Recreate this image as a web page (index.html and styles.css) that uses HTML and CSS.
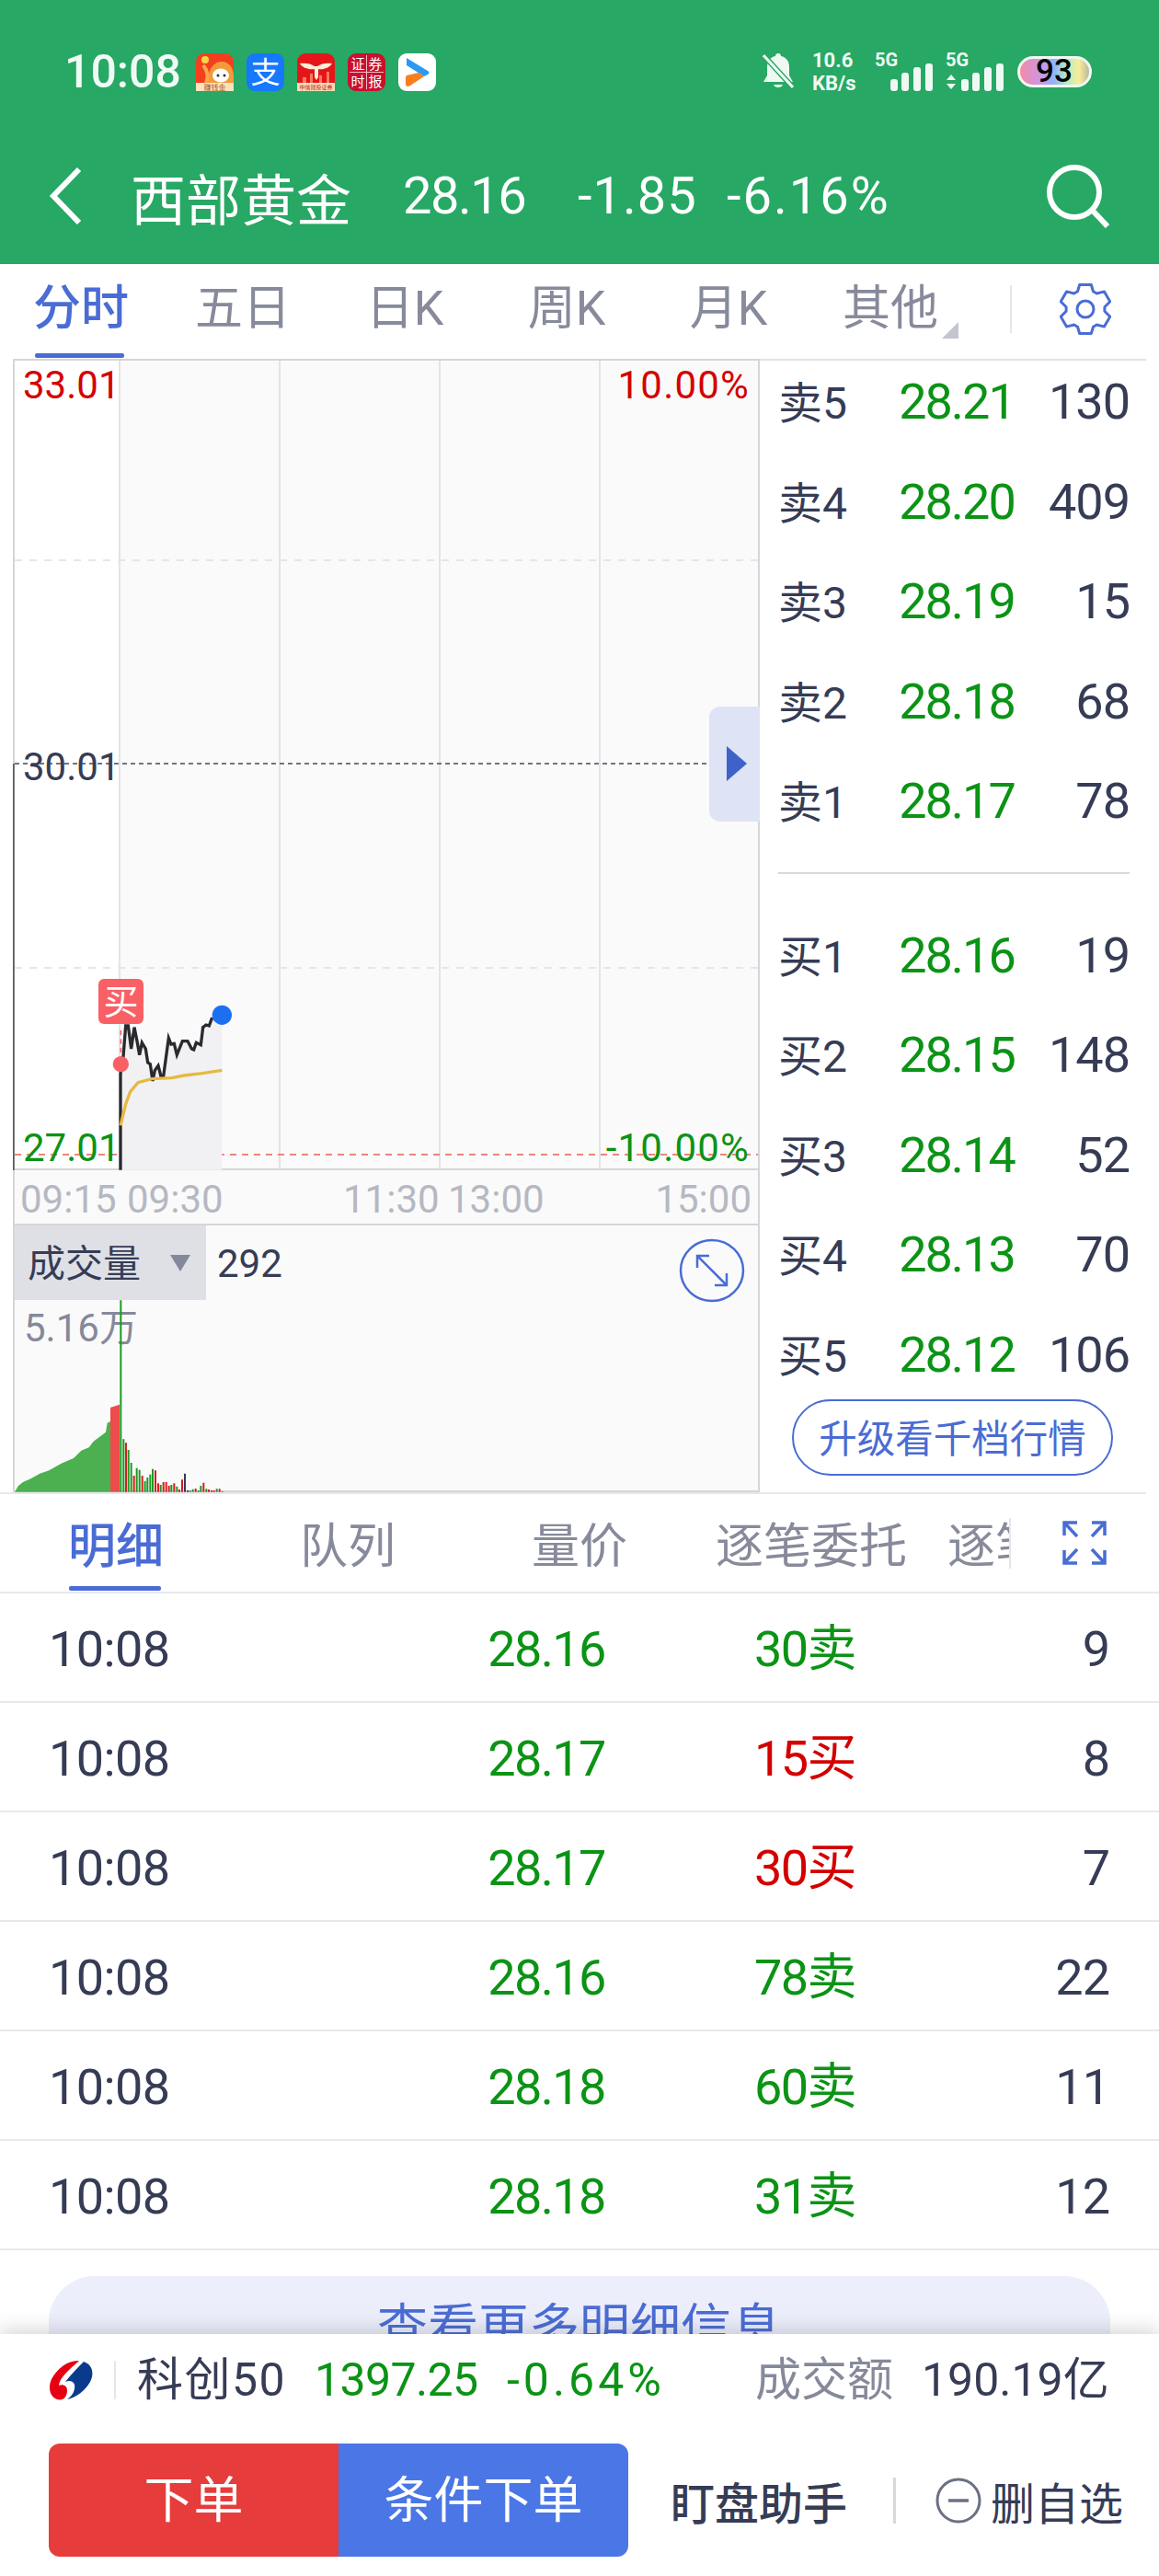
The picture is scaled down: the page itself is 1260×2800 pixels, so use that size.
FILE: index.html
```html
<!DOCTYPE html>
<html lang="zh-CN">
<head>
  <meta charset="UTF-8" />
  <meta name="viewport" content="width=device-width, initial-scale=1.0" />
  <title>西部黄金</title>
  <link rel="stylesheet" href="styles.css">
</head>
<body>
<div class="phone">
  <header class="header">
    <div class="status">
      <span class="clock">10:08</span>
      <div class="app-icons">
        <svg class="app" viewBox="0 0 41 41"><rect width="41" height="41" rx="9" fill="#f2401f"/><path d="M13 34c-1-14 5-25 15-25 9 0 13 8 13 16v9z" fill="#f59a3a"/><ellipse cx="27" cy="24" rx="9" ry="7.500" fill="#fff"/><circle cx="24" cy="24" r="1.500" fill="#333"/><circle cx="31" cy="24" r="1.500" fill="#333"/><circle cx="10" cy="7" r="4" fill="#f7d24a"/><path d="M8 13c5 6 6 12 3 20" stroke="#f9a64a" stroke-width="4" fill="none"/><rect y="32" width="41" height="9" fill="#fbe3bd"/><text class="app-small" x="20.500" y="40" text-anchor="middle">赚钱金</text></svg>
        <svg class="app" viewBox="0 0 41 41"><rect width="41" height="41" rx="9" fill="#1677ff"/><text class="app-char" x="20.500" y="32" text-anchor="middle">支</text></svg>
        <svg class="app" viewBox="0 0 41 41"><rect width="41" height="41" rx="9" fill="#e5161a"/><path d="M3 11c6-1 12 0 16 3h3c4-3 10-4 16-3-3 5-10 7-15 6v9l-2 3-2-3v-9c-6 1-13-1-16-6z" fill="#fdeed8"/><path d="M6 32v-6h4v6zm8 0v-10h3v10zm10 0v-8h3v8zm8 0v-12h3v12z" fill="#f77b5c"/><rect y="32" width="41" height="9" fill="#fbdcb4"/><text class="app-tiny" x="20.500" y="39" text-anchor="middle">中信建投证券</text></svg>
        <svg class="app" viewBox="0 0 41 41"><rect width="41" height="41" rx="9" fill="#c9102f"/><path d="M20.500 2v37M2 20.500h37" stroke="#f4b9c0" stroke-width="1"/><text class="app-cell" x="11" y="17" text-anchor="middle">证</text><text class="app-cell" x="30" y="17" text-anchor="middle">券</text><text class="app-cell" x="11" y="36" text-anchor="middle">时</text><text class="app-cell" x="30" y="36" text-anchor="middle">报</text></svg>
        <svg class="app" viewBox="0 0 41 41"><rect width="41" height="41" rx="9" fill="#fff"/><path d="M9 5l23 14c2 1 2 3 0 4l-4 2L9 13z" fill="#2b9af3"/><path d="M9 24l13-3 6 4-15 10c-3 2-5 1-5-2v-7z" fill="#f97e1c"/></svg>
      </div>
      <div class="status-right">
        <svg class="bell" viewBox="0 0 34 42"><path d="M17 1c2 0 3 1 3 3 6 1 9 6 9 12v9l4 7H1l4-7v-9c0-6 3-11 9-12 0-2 1-3 3-3zM12 35h10c-1 4-9 4-10 0z" fill="#eef9f3"/><path d="M1 3l32 35" stroke="#27a864" stroke-width="6"/><path d="M1 3l32 35" stroke="#eef9f3" stroke-width="3"/></svg>
        <div class="speed"><span>10.6</span><span>KB/s</span></div>
        <svg class="signal" viewBox="0 -4 64 46"><text class="net" x="0" y="15">5G</text><rect x="17" y="29" width="8" height="13" rx="3"/><rect x="29" y="22" width="8" height="20" rx="3"/><rect x="42" y="16" width="8" height="26" rx="3"/><rect x="55" y="12" width="8" height="30" rx="3"/></svg>
        <svg class="signal signal-b" viewBox="0 -4 64 46"><text class="net" x="0" y="15">5G</text><path d="M1 30l5-6 5 6zM1 34l5 6 5-6z"/><rect x="17" y="29" width="8" height="13" rx="3"/><rect x="29" y="22" width="8" height="20" rx="3"/><rect x="42" y="16" width="8" height="26" rx="3"/><rect x="55" y="12" width="8" height="30" rx="3"/></svg>
        <span class="battery">93</span>
      </div>
    </div>
    <div class="nav">
      <svg class="back" viewBox="0 0 36 64"><path d="M33 3L5 32l28 29" fill="none" stroke="#fff" stroke-width="6"/></svg>
      <span class="stock-name">西部黄金</span>
      <span class="stock-price">28.16</span>
      <span class="stock-diff">-1.85</span>
      <span class="stock-pct">-6.16%</span>
      <svg class="search" viewBox="0 0 70 70"><circle cx="31" cy="31" r="27" fill="none" stroke="#fff" stroke-width="6"/><path d="M50 50l17 18" stroke="#fff" stroke-width="6"/></svg>
    </div>
  </header>

  <nav class="period-tabs">
    <span class="period active">分时</span>
    <span class="period">五日</span>
    <span class="period">日K</span>
    <span class="period">周K</span>
    <span class="period">月K</span>
    <span class="period more">其他</span>
    <span class="tab-sep"></span>
    <svg class="gear" viewBox="0 0 56 56"><path d="M21.700 1.500H34.300L36.500 8.800L40.300 11L48.500 8.900L54.800 19.800L48.900 25.800V30.200L54.800 36.200L48.500 47.100L40.300 45L36.500 47.200L34.300 54.500H21.700L19.500 47.200L15.700 45L7.500 47.100L1.200 36.200L7.100 30.200V25.800L1.200 19.800L7.500 8.900L15.700 11L19.500 8.800Z" fill="none" stroke="#4a6cd4" stroke-width="3" stroke-linejoin="round"/><circle cx="28" cy="28" r="9" fill="none" stroke="#4a6cd4" stroke-width="3"/></svg>
  </nav>

  <section class="quote">
    <div class="charts">
      <svg class="price-chart" viewBox="14 390 812 882">
        <rect x="14" y="390" width="812" height="882" fill="#fafafa"/>
        <rect x="16" y="390" width="114" height="882" fill="#fff"/>
        <path class="grid" d="M130 390V1272M304 390V1272M478 390V1272M652 390V1272"/>
        <path class="grid-dash" d="M16 609H826M16 1052H826"/>
        <path class="mid-dash" d="M16 830H826"/>
        <path class="low-dash" d="M16 1255H826"/>
        <path class="frame" d="M15 390V1272M14 391H826M825 390V1272M14 1271H826"/>
        <g transform="translate(0 1000) scale(.33333)">
          <path class="area" d="M393 815V500L400 470L410 345L418 345L428 420L438 350L447 395L455 440L463 400L475 420L482 465L490 470L498 525L505 490L516 475L525 510L533 510L550 385L558 405L568 403L577 440L595 395L612 395L625 420L632 423L640 400L655 407L662 350L672 342L682 345L692 318L724 310V815Z"/>
          <path class="dash-up" d="M394 360V450"/>
          <path class="price-line" d="M393 815V500L400 470L410 345L418 345L428 420L438 350L447 395L455 440L463 400L475 420L482 465L490 470L498 525L505 490L516 475L525 510L533 510L550 385L558 405L568 403L577 440L595 395L612 395L625 420L632 423L640 400L655 407L662 350L672 342L682 345L692 318"/>
          <path class="avg-line" d="M393 670L410 600L425 560L450 530L495 518L560 515L600 507L660 500L724 490"/>
          <circle cx="724" cy="310" r="32" fill="#1d6ff2"/>
          <circle cx="394" cy="470" r="26" fill="#f96065"/>
          <path class="axis-dark" d="M44 -510V820H393"/>
        </g>
        <rect x="107" y="1064" width="49" height="49" rx="6" fill="#f96065"/>
        <text class="badge-text" x="131.500" y="1102" text-anchor="middle">买</text>
        <text class="lbl up" x="25" y="433">33.01</text>
        <text class="lbl pct up" x="815" y="433" text-anchor="end">10.00%</text>
        <text class="lbl dark" x="25" y="848">30.01</text>
        <text class="lbl down" x="25" y="1262">27.01</text>
        <text class="lbl pct down" x="815" y="1262" text-anchor="end">-10.00%</text>
        <path d="M826 768H783a12 12 0 0 0-12 12V881a12 12 0 0 0 12 12H826z" fill="#dfe3f6"/>
        <path d="M790 811l22 19-22 19z" fill="#3f62c9"/>
      </svg>
      <svg class="time-axis" viewBox="14 1272 812 58">
        <path class="frame" d="M15 1272V1330M825 1272V1330"/>
        <text class="tick" x="22" y="1318">09:15</text>
        <text class="tick" x="138" y="1318">09:30</text>
        <text class="tick" x="373" y="1318">11:30</text>
        <text class="tick" x="487" y="1318">13:00</text>
        <text class="tick" x="817" y="1318" text-anchor="end">15:00</text>
      </svg>
      <svg class="volume" viewBox="14 1330 812 292">
        <rect x="16" y="1330" width="208" height="83" fill="#dfe0e5"/>
        <path class="frame" d="M15 1330V1622M14 1331H826M825 1330V1622M14 1621H826"/>
        <text class="lbl vol-name" x="30" y="1388">成交量</text>
        <path d="M185 1364h22l-11 18z" fill="#85889a"/>
        <text class="lbl dark" x="236" y="1388">292</text>
        <text class="lbl grey" x="26" y="1458">5.16万</text>
        <g transform="translate(0 1300) scale(.33333)">
          <path d="M48 965L60 945L75 933L100 922L130 905L160 895L200 872L240 855L265 830L290 820L305 800L345 770L350 740L360 735V965Z" fill="#4cb050"/>
          <path d="M360 690L390 680V965H360Z" fill="#ee4b4b"/>
          <path class="bar-g" d="M394 340V965M403 793V965M419 828V965M428 870V965M446 887V965M455 893V965M473 930V965M481 918V965M490 908V965M498 890V965M524 942V965M559 942V965M577 947V965M620 960V965M629 956V965M647 960V965M655 945V965M673 955V965M707 955V965M725 962V965"/>
          <path class="bar-r" d="M411 805V965M437 912V965M464 912V965M507 895V965M516 937V965M533 933V965M542 933V965M551 945V965M568 937V965M585 957V965M594 925V965M638 954V965M664 935V965M681 957V965M690 960V965M698 960V965M716 955V965"/>
          <path class="bar-d" d="M603 905V965M612 960V965"/>
        </g>
        <g fill="none" stroke="#4a6cd4" stroke-width="2.500">
          <ellipse cx="774" cy="1381" rx="34" ry="33"/>
          <path d="M759 1366l30 30M758 1378v-13h13M790 1384v13h-13"/>
        </g>
      </svg>
    </div>
    <div class="book">
      <div class="book-row"><span class="b-label">卖5</span><span class="b-price">28.21</span><span class="b-count">130</span></div>
      <div class="book-row"><span class="b-label">卖4</span><span class="b-price">28.20</span><span class="b-count">409</span></div>
      <div class="book-row"><span class="b-label">卖3</span><span class="b-price">28.19</span><span class="b-count">15</span></div>
      <div class="book-row"><span class="b-label">卖2</span><span class="b-price">28.18</span><span class="b-count">68</span></div>
      <div class="book-row"><span class="b-label">卖1</span><span class="b-price">28.17</span><span class="b-count">78</span></div>
      <div class="book-sep"></div>
      <div class="book-row"><span class="b-label">买1</span><span class="b-price">28.16</span><span class="b-count">19</span></div>
      <div class="book-row"><span class="b-label">买2</span><span class="b-price">28.15</span><span class="b-count">148</span></div>
      <div class="book-row"><span class="b-label">买3</span><span class="b-price">28.14</span><span class="b-count">52</span></div>
      <div class="book-row"><span class="b-label">买4</span><span class="b-price">28.13</span><span class="b-count">70</span></div>
      <div class="book-row"><span class="b-label">买5</span><span class="b-price">28.12</span><span class="b-count">106</span></div>
      <div class="upgrade">升级看千档行情</div>
    </div>
  </section>

  <div class="detail-tabs">
    <div class="detail-scroll">
      <span class="detail-tab active">明细</span>
      <span class="detail-tab">队列</span>
      <span class="detail-tab">量价</span>
      <span class="detail-tab">逐笔委托</span>
      <span class="detail-tab">逐笔成交</span>
    </div>
    <svg class="fullscreen" viewBox="0 0 48 48"><path d="M2 16V2h14M2 2l14 15M32 2h14v14M46 2L32 17M2 32v14h14M2 46l14-15M46 32v14H32M46 46L32 31" fill="none" stroke="#4a6cd4" stroke-width="3.500"/></svg>
  </div>

  <div class="trades">
    <div class="trade"><span class="t-time">10:08</span><span class="t-price">28.16</span><span class="t-vol down">30卖</span><span class="t-num">9</span></div>
    <div class="trade"><span class="t-time">10:08</span><span class="t-price">28.17</span><span class="t-vol up">15买</span><span class="t-num">8</span></div>
    <div class="trade"><span class="t-time">10:08</span><span class="t-price">28.17</span><span class="t-vol up">30买</span><span class="t-num">7</span></div>
    <div class="trade"><span class="t-time">10:08</span><span class="t-price">28.16</span><span class="t-vol down">78卖</span><span class="t-num">22</span></div>
    <div class="trade"><span class="t-time">10:08</span><span class="t-price">28.18</span><span class="t-vol down">60卖</span><span class="t-num">11</span></div>
    <div class="trade"><span class="t-time">10:08</span><span class="t-price">28.18</span><span class="t-vol down">31卖</span><span class="t-num">12</span></div>
  </div>
  <div class="more-btn">查看更多明细信息</div>

  <footer class="footer">
    <div class="index-row">
      <svg class="logo" viewBox="0 0 48 44"><ellipse cx="24" cy="22" rx="24" ry="21" fill="#fff"/><path d="M33 1C22 0 9 9 3 21c-4 9-2 19 6 22 7 2 11-3 11-10 0-5-5-7-9-5 1-9 10-16 22-27z" fill="#e60012"/><path d="M38 2c9 3 12 12 7 22-5 9-15 17-25 19 6-4 9-10 8-16-1-4-6-5-10-3 6-8 13-15 20-22z" fill="#0a3a8c"/></svg>
      <span class="index-sep"></span>
      <span class="index-name">科创50</span>
      <span class="index-val">1397.25</span>
      <span class="index-pct">-0.64%</span>
      <span class="index-turn-label">成交额</span>
      <span class="index-turn">190.19亿</span>
    </div>
    <div class="action-row">
      <div class="order-btns">
        <span class="btn-order">下单</span>
        <span class="btn-cond">条件下单</span>
      </div>
      <span class="helper">盯盘助手</span>
      <span class="action-sep"></span>
      <svg class="minus" viewBox="0 0 50 50"><circle cx="25" cy="25" r="23" fill="none" stroke="#6b7084" stroke-width="3"/><path d="M14 25h22" stroke="#6b7084" stroke-width="3.500"/></svg>
      <span class="remove">删自选</span>
    </div>
  </footer>
</div>
</body>
</html>
```

FILE: styles.css
```css
* {
  box-sizing: border-box;
}
body {
  margin: 0;
  background: #fff;
  font-family: Roboto, "Noto Sans CJK SC", sans-serif;
  color: #363c55;
}
.phone {
  position: relative;
  width: 1260px;
  height: 2800px;
  overflow: hidden;
}

/* header */
.header {
  height: 287px;
  background: #27a864;
  color: #f0faf5;
}
.status {
  display: flex;
  align-items: center;
  height: 156px;
  padding-left: 70px;
}
.clock {
  width: 143px;
  font-size: 50px;
  font-weight: 500;
}
.app-icons {
  display: flex;
  gap: 14px;
}
.app {
  width: 41px;
  height: 41px;
}
.app-char {
  font-size: 32px;
  fill: #fff;
}
.app-small {
  font-size: 8px;
  fill: #a8561c;
}
.app-tiny {
  font-size: 6px;
  fill: #b8261c;
}
.app-cell {
  font-size: 15px;
  fill: #fff;
}
.status-right {
  display: flex;
  align-items: center;
  margin-left: 355px;
}
.bell {
  width: 34px;
  height: 42px;
}
.speed {
  display: flex;
  flex-direction: column;
  margin-left: 20px;
  font-size: 22px;
  font-weight: 700;
  line-height: 25px;
  color: #eef9f3;
}
.signal {
  width: 64px;
  height: 46px;
  margin-left: 20px;
  margin-bottom: 4px;
  fill: #eef9f3;
}
.signal-b {
  margin-left: 13px;
}
.net {
  font-size: 20px;
  font-weight: 700;
}
.battery {
  width: 81px;
  height: 34px;
  margin-left: 14px;
  border: 3px solid #eef9f3;
  border-radius: 17px;
  background: linear-gradient(90deg, #f58aa5, #c39af0 35%, #8fb6f5 50%, #b6ecc0 68%, #f9ee9a 85%, #b9b9a0);
  color: #000;
  font-size: 35px;
  font-weight: 500;
  line-height: 28px;
  text-align: center;
}
.nav {
  display: flex;
  align-items: center;
  height: 131px;
  padding: 0 53px 17px;
  color: #fff;
  white-space: nowrap;
}
.back {
  width: 36px;
  height: 64px;
  flex: none;
}
.stock-name {
  width: 296px;
  margin-left: 53px;
  font-size: 60px;
}
.stock-price,
.stock-diff,
.stock-pct {
  font-size: 56px;
}
.stock-price {
  width: 190px;
  letter-spacing: -1.500px;
}
.stock-diff {
  width: 162px;
  letter-spacing: 1px;
}
.stock-pct {
  letter-spacing: 2px;
}
.search {
  width: 70px;
  height: 70px;
  flex: none;
  margin-left: auto;
}

/* period tabs */
.period-tabs {
  display: flex;
  align-items: center;
  height: 103px;
  padding-bottom: 6px;
}
.period {
  position: relative;
  width: 176px;
  text-align: center;
  font-size: 52px;
  color: #878a9b;
  line-height: 97px;
}
.period.active {
  color: #4a6cd4;
  font-weight: 500;
}
.period.active::after {
  content: "";
  position: absolute;
  left: 38px;
  bottom: -5px;
  width: 97px;
  height: 5px;
  border-radius: 2px;
  background: #4a6cd4;
}
.period.more::after {
  content: "";
  position: absolute;
  right: 14px;
  bottom: 16px;
  border-style: solid;
  border-width: 0 0 18px 18px;
  border-color: transparent transparent #c4c6cf transparent;
}
.tab-sep {
  width: 2px;
  height: 52px;
  margin-left: 42px;
  background: #e6e6ea;
}
.gear {
  width: 56px;
  height: 56px;
  margin-left: 52px;
}

/* charts + order book */
.quote {
  display: flex;
  width: 1232px;
  height: 1232px;
  margin-left: 14px;
  border-top: 2px solid #e2e2e7;
}
.charts {
  display: flex;
  flex-direction: column;
  width: 812px;
  flex: none;
  margin-top: -2px;
}
.price-chart {
  display: block;
  width: 812px;
  height: 882px;
  flex: none;
}
.time-axis {
  display: block;
  width: 812px;
  height: 58px;
  flex: none;
  background: #fafafa;
}
.volume {
  display: block;
  width: 812px;
  height: 292px;
  flex: none;
  background: #fafafa;
}
.frame {
  fill: none;
  stroke: #d5d6dc;
  stroke-width: 2;
}
.grid {
  stroke: #e4e4e8;
  stroke-width: 2;
  fill: none;
}
.grid-dash {
  stroke: #e6e6ea;
  stroke-width: 2;
  stroke-dasharray: 8 8;
  fill: none;
}
.mid-dash {
  stroke: #44485c;
  stroke-width: 1.500;
  stroke-dasharray: 5 4;
  fill: none;
}
.low-dash {
  stroke: #e8604f;
  stroke-width: 1.500;
  stroke-dasharray: 7 6;
  fill: none;
}
.area {
  fill: #f1f1f4;
}
.price-line {
  fill: none;
  stroke: #2a2a2e;
  stroke-width: 10;
}
.avg-line {
  fill: none;
  stroke: #e5ba40;
  stroke-width: 10;
}
.dash-up {
  stroke: #f96065;
  stroke-width: 5;
  stroke-dasharray: 16 12;
}
.axis-dark {
  fill: none;
  stroke: #55565e;
  stroke-width: 6;
}
.badge-text {
  font-size: 38px;
  fill: #fff;
}
.lbl {
  font-size: 42px;
}
.lbl.pct {
  letter-spacing: 1.200px;
}
.vol-name {
  font-size: 41px;
  fill: #363c55;
}
.up {
  fill: #d40000;
  color: #d40000;
}
.down {
  fill: #0b9315;
  color: #0b9315;
}
.dark {
  fill: #363c55;
}
.grey {
  fill: #85899a;
}
.tick {
  font-size: 42px;
  fill: #b5b8c2;
}
.bar-g,
.bar-r,
.bar-d {
  fill: none;
  stroke-width: 6;
}
.bar-g {
  stroke: #1a9a22;
}
.bar-r {
  stroke: #d91c1c;
}
.bar-d {
  stroke: #363c55;
}
.book {
  flex: 1;
  margin-top: -9px;
  padding: 0 18px 0 20px;
}
.book-row {
  display: flex;
  align-items: baseline;
  height: 108.500px;
  font-size: 54px;
  line-height: 108px;
}
.b-label {
  width: 110px;
  font-size: 48px;
}
.b-price {
  width: 148px;
  margin-left: 10px;
  text-align: center;
  color: #0b9315;
  letter-spacing: -2px;
}
.b-count {
  flex: 1;
  text-align: right;
  letter-spacing: -1px;
}
.book-sep {
  height: 2px;
  margin: 22px 0 35px;
  background: #d8d8dd;
}
.upgrade {
  width: 349px;
  height: 83px;
  margin: -6px 0 0 15px;
  border: 2px solid #4a6cd4;
  border-radius: 42px;
  color: #4a6cd4;
  font-size: 41.500px;
  line-height: 83px;
  text-align: center;
  white-space: nowrap;
}

/* detail tabs */
.detail-tabs {
  position: relative;
  display: flex;
  align-items: center;
  height: 108px;
  margin-right: 14px;
  border-top: 2px solid #e8e8ec;
}
.detail-scroll {
  display: flex;
  width: 1098px;
  height: 70px;
  margin-top: 10px;
  overflow: hidden;
}
.detail-tab {
  flex: none;
  width: 252px;
  text-align: center;
  font-size: 52px;
  line-height: 70px;
  color: #878a9b;
  white-space: nowrap;
}
.detail-tab.active {
  color: #4a6cd4;
  font-weight: 500;
}
.detail-tabs::before {
  content: "";
  position: absolute;
  left: 1097px;
  top: 26px;
  width: 2px;
  height: 55px;
  background: #e6e6ea;
}
.detail-tabs::after {
  content: "";
  position: absolute;
  left: 75px;
  bottom: 1px;
  width: 100px;
  height: 5px;
  background: #4a6cd4;
  border-radius: 2px;
}
.fullscreen {
  width: 48px;
  height: 48px;
  margin-left: 57px;
}

/* trades */
.trades {
  border-top: 2px solid #e8e8ec;
}
.trade {
  display: flex;
  align-items: baseline;
  height: 119px;
  padding: 0 54px 0 53px;
  font-size: 54px;
  line-height: 121px;
  border-bottom: 2px solid #e8e8ec;
}
.t-time {
  width: 467px;
  letter-spacing: -.6px;
}
.t-price {
  width: 148px;
  text-align: center;
  color: #0b9315;
  letter-spacing: -1.600px;
}
.t-vol {
  width: 262px;
  text-align: right;
  letter-spacing: -1.600px;
}
.t-num {
  flex: 1;
  text-align: right;
  letter-spacing: -1px;
}
.more-btn {
  width: 1154px;
  height: 140px;
  margin: 28px 0 0 53px;
  border-radius: 50px;
  background: #eceefb;
  color: #4a6cd4;
  font-size: 55px;
  line-height: 112px;
  text-align: center;
}

/* footer */
.footer {
  position: absolute;
  left: 0;
  right: 0;
  bottom: 0;
  height: 263px;
  padding: 0 40px 0 53px;
  background: #fff;
  box-shadow: 0 -4px 20px rgba(60, 60, 70, 0.22);
}
.index-row {
  display: flex;
  align-items: center;
  height: 100px;
  font-size: 50px;
  line-height: 100px;
  white-space: nowrap;
}
.logo {
  width: 48px;
  height: 44px;
  flex: none;
}
.index-sep {
  width: 2px;
  height: 42px;
  margin: 0 23px;
  flex: none;
  background: #e6e6ea;
}
.index-name {
  width: 193px;
  letter-spacing: 1.500px;
}
.index-val {
  width: 209px;
  color: #0b9315;
  letter-spacing: -.6px;
}
.index-pct {
  width: 270px;
  color: #0b9315;
  letter-spacing: 4px;
}
.index-turn-label {
  width: 181px;
  color: #85899a;
}
.action-row {
  display: flex;
  align-items: center;
  height: 123px;
  margin-top: 19px;
  white-space: nowrap;
}
.order-btns {
  display: flex;
  flex: none;
  width: 630px;
  height: 123px;
  border-radius: 12px;
  overflow: hidden;
  color: #fff;
  font-size: 54px;
  line-height: 126px;
  text-align: center;
}
.btn-order {
  width: 315px;
  background: #e63c3c;
}
.btn-cond {
  width: 315px;
  background: #4a76e6;
}
.helper {
  margin-left: 46px;
  font-size: 48px;
  font-weight: 500;
}
.action-sep {
  width: 3px;
  height: 50px;
  margin-left: 50px;
  flex: none;
  background: #d8d8dd;
}
.minus {
  width: 50px;
  height: 50px;
  flex: none;
  margin-left: 43px;
}
.remove {
  margin-left: 10px;
  font-size: 48px;
}
```
